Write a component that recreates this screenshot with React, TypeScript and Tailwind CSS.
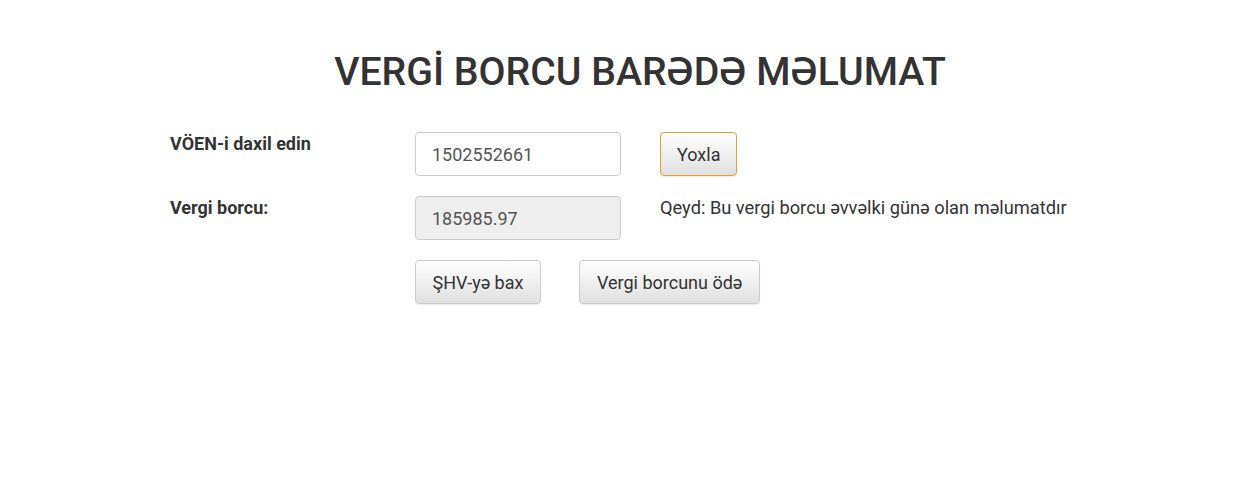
import React from "react";

export default function App() {
  const btn =
    "h-[44px] rounded-[4px] border border-[#cccccc] bg-gradient-to-b from-[#ffffff] to-[#e0e0e0] text-[18px] text-[#333333] shadow-[0_1px_1px_rgba(0,0,0,0.08)]";
  return (
    <div className="min-h-[477px] w-full bg-white text-[#333333]" style={{ fontFamily: "Roboto, 'Noto Sans', sans-serif" }}>
      <div className="flex justify-center pt-[48px] pl-[23px]">
        <h1 className="text-[39.2px] leading-[48px] font-medium text-[#333333]">VERGİ BORCU BARƏDƏ MƏLUMAT</h1>
      </div>
      <div className="mt-[36px] flex flex-col gap-[20px] pl-[170px]">
        <div className="flex items-start">
          <div className="w-[245px] pt-[1px] text-[18px] leading-[22px] font-bold">VÖEN-i daxil edin</div>
          <input
            readOnly
            value="1502552661"
            className="h-[44px] w-[206px] rounded-[4px] border border-[#cccccc] bg-white px-4 text-[18px] text-[#555555] outline-none"
          />
          <button className={`${btn} ml-[39px] border-[#e5a234] px-[16px] from-[#f2f2f2] to-[#dedede] shadow-[0_0_0_1px_#f0b860]`}>Yoxla</button>
        </div>
        <div className="flex items-start">
          <div className="w-[245px] pt-[1px] text-[18px] leading-[22px] font-bold">Vergi borcu:</div>
          <input
            readOnly
            value="185985.97"
            className="h-[44px] w-[206px] rounded-[4px] border border-[#cccccc] bg-[#eeeeee] px-4 text-[18px] text-[#555555] outline-none"
          />
          <div className="ml-[39px] pt-[1px] text-[18.25px] leading-[22px] text-[#333333]">
            Qeyd: Bu vergi borcu əvvəlki günə olan məlumatdır
          </div>
        </div>
        <div className="flex items-start pl-[245px] gap-[38px]">
          <button className={`${btn} px-[16.5px]`}>ŞHV-yə bax</button>
          <button className={`${btn} px-[17px]`}>Vergi borcunu ödə</button>
        </div>
      </div>
    </div>
  );
}
